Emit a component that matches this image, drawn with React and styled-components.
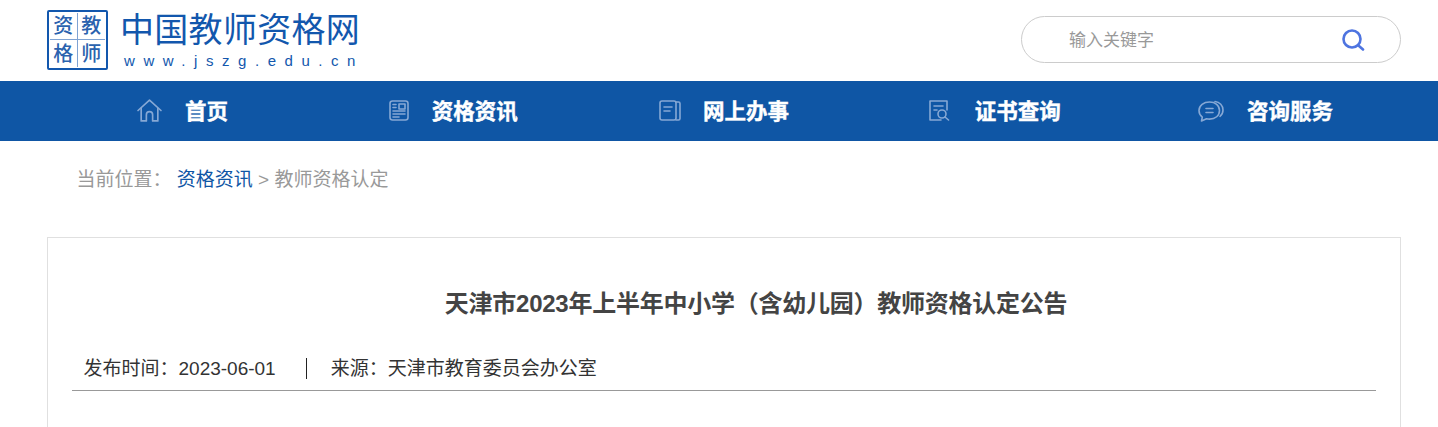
import styled, { createGlobalStyle } from "styled-components";

const GlobalStyle = createGlobalStyle`
  html, body {
    margin: 0;
    padding: 0;
    background: #fff;
    font-family: "Liberation Sans", "Noto Sans CJK SC", sans-serif;
  }
  body {
    height: 427px;
    overflow: hidden;
  }
`;

const Header = styled.header`
  display: flex;
  align-items: flex-start;
  justify-content: space-between;
  height: 81px;
  padding: 10px 37px 0 47px;
  box-sizing: border-box;
`;

const Logo = styled.a`
  display: flex;
  gap: 12px;
  color: #1257ad;
`;

const LogoBox = styled.div`
  display: grid;
  grid-template-columns: 1fr 1fr;
  grid-template-rows: 1fr 1fr;
  width: 61px;
  height: 60px;
  box-sizing: border-box;
  padding: 1px;
  border: 2px solid #1257ad;
  border-radius: 2px;
`;

const LogoCell = styled.span`
  display: flex;
  align-items: center;
  justify-content: center;
  font-size: 20px;
  line-height: 1;
  font-weight: 500;
  color: #2a62ae;
  border-right: ${(props) => (props.right ? "1px solid #7fa3d3" : "none")};
  border-bottom: ${(props) => (props.bottom ? "1px solid #7fa3d3" : "none")};
`;

const LogoText = styled.div`
  display: flex;
  flex-direction: column;
`;

const LogoTitle = styled.div`
  margin-top: 1px;
  font-size: 34px;
  line-height: 38px;
  letter-spacing: 0.3px;
  white-space: nowrap;
`;

const LogoUrl = styled.div`
  margin-top: 3px;
  padding-left: 4px;
  font-size: 15px;
  line-height: 17px;
  letter-spacing: 8.55px;
  white-space: nowrap;
`;

const Search = styled.div`
  display: flex;
  align-items: center;
  justify-content: space-between;
  width: 380px;
  height: 47px;
  margin-top: 6px;
  padding: 0 35px 0 47px;
  box-sizing: border-box;
  border: 1px solid #ccc;
  border-radius: 24px;
  font-size: 17px;
  color: #999;
`;

const SearchLabel = styled.span`
  padding-bottom: 3px;
`;

const Nav = styled.nav`
  display: grid;
  grid-template-columns: repeat(5, 1fr);
  height: 60px;
  padding: 0 37px 0 47px;
  background: #0f56a5;
`;

const NavItem = styled.a`
  display: flex;
  align-items: center;
  justify-content: center;
  gap: ${(props) => props.gap}px;
  font-size: 21.5px;
  font-weight: 700;
  color: #fff;
`;

const NavLabel = styled.span`
  padding-bottom: 4px;
  -webkit-text-stroke: 0.4px #fff;
`;

const NavIcon = styled.svg`
  flex: none;
  margin-bottom: 1px;
  fill: none;
  stroke: #86a8d5;
  stroke-width: 1.6;
  stroke-linecap: round;
  stroke-linejoin: round;
`;

const Breadcrumb = styled.div`
  display: flex;
  align-items: center;
  height: 76px;
  padding: 0 0 4px 76.5px;
  box-sizing: border-box;
  font-size: 19px;
  color: #999;
  white-space: pre;
`;

const Crumb = styled.a`
  color: #0f56a5;
`;

const Card = styled.article`
  height: 190px;
  margin: 20px 37px 0 47px;
  padding: 0 24px;
  border: 1px solid #e0e0e0;
  border-bottom: none;
`;

const Title = styled.h1`
  margin: 0;
  padding: 50px 0 0 64px;
  font-size: 24px;
  line-height: 32px;
  font-weight: 700;
  letter-spacing: -0.25px;
  text-align: center;
  color: #444;
`;

const Meta = styled.div`
  display: flex;
  align-items: center;
  height: 71px;
  padding: 23px 0 0 11.5px;
  box-sizing: border-box;
  border-bottom: 1px solid #999;
  font-size: 19px;
  color: #333;
`;

const MetaDivider = styled.span`
  width: 1px;
  height: 21px;
  margin: 3px 24px 0 30px;
  background: #222;
`;

const HomeIcon = () => (
  <NavIcon width="25" height="23" viewBox="0 0 24 22">
    <path d="M1 11 12 1l11 10" />
    <path d="M4 9v12h5v-6a3 3 0 0 1 6 0v6h5V9" />
  </NavIcon>
);

const NewsIcon = () => (
  <NavIcon width="20" height="21" viewBox="0 0 20 21">
    <rect x="1" y="1" width="18" height="19" rx="2.500" />
    <rect x="10" y="4" width="6" height="5" />
    <path d="M4 4.500h3M4 7.500h3M4 11h12M4 14h12M4 17h6" />
  </NavIcon>
);

const DocIcon = () => (
  <NavIcon width="22" height="21" viewBox="0 0 22 21">
    <rect x="1" y="1" width="16" height="19" rx="2" />
    <path d="M17 2h2.500a1.500 1.500 0 0 1 1.500 1.500v15a1.500 1.500 0 0 1-1.500 1.500H17" />
    <path d="M5 7h8M5 11h6" />
  </NavIcon>
);

const QueryIcon = () => (
  <NavIcon width="21" height="21" viewBox="0 0 21 21">
    <path d="M18 10V1H1v19h11" />
    <path d="M5 6h9M5 10h3" />
    <circle cx="13" cy="14" r="4" />
    <path d="m16 17 3.500 3" />
  </NavIcon>
);

const ChatIcon = () => (
  <NavIcon width="26" height="22" viewBox="0 0 26 22">
    <path d="M11.500 2C5.700 2 1 5.300 1 10.500c0 2.800 1.200 5 3.300 6.600L3.500 21l5-2.200c1 .2 2 .3 3 .3 5.800 0 10-3.400 10-8.600S17.300 2 11.500 2Z" />
    <path d="M17 1.500c4.700.5 8 4 8 8.500 0 2.600-1 4.800-3 6.300" />
    <path d="M8 8.500h7M8 12.500h7" />
  </NavIcon>
);

const SearchIcon = () => (
  <svg width="24" height="22" viewBox="0 0 24 22" fill="none" stroke="#4e74e0" strokeWidth="2.6" strokeLinecap="round">
    <circle cx="11" cy="10" r="8.500" />
    <path d="m18 17 4 3.500" />
  </svg>
);

const navItems = [
  { label: "首页", icon: <HomeIcon />, gap: 23 },
  { label: "资格资讯", icon: <NewsIcon />, gap: 23 },
  { label: "网上办事", icon: <DocIcon />, gap: 22 },
  { label: "证书查询", icon: <QueryIcon />, gap: 25 },
  { label: "咨询服务", icon: <ChatIcon />, gap: 23 },
];

const App = () => {
  return (
    <>
      <GlobalStyle />
      <Header>
        <Logo>
          <LogoBox>
            <LogoCell right bottom>资</LogoCell>
            <LogoCell bottom>教</LogoCell>
            <LogoCell right>格</LogoCell>
            <LogoCell>师</LogoCell>
          </LogoBox>
          <LogoText>
            <LogoTitle>中国教师资格网</LogoTitle>
            <LogoUrl>www.jszg.edu.cn</LogoUrl>
          </LogoText>
        </Logo>
        <Search>
          <SearchLabel>输入关键字</SearchLabel>
          <SearchIcon />
        </Search>
      </Header>
      <Nav>
        {navItems.map((item) => (
          <NavItem key={item.label} gap={item.gap}>
            {item.icon}
            <NavLabel>{item.label}</NavLabel>
          </NavItem>
        ))}
      </Nav>
      <Breadcrumb>
        当前位置： <Crumb>资格资讯</Crumb> &gt; 教师资格认定
      </Breadcrumb>
      <Card>
        <Title>天津市2023年上半年中小学（含幼儿园）教师资格认定公告</Title>
        <Meta>
          发布时间：2023-06-01
          <MetaDivider />
          来源：天津市教育委员会办公室
        </Meta>
      </Card>
    </>
  );
};

export default App;
